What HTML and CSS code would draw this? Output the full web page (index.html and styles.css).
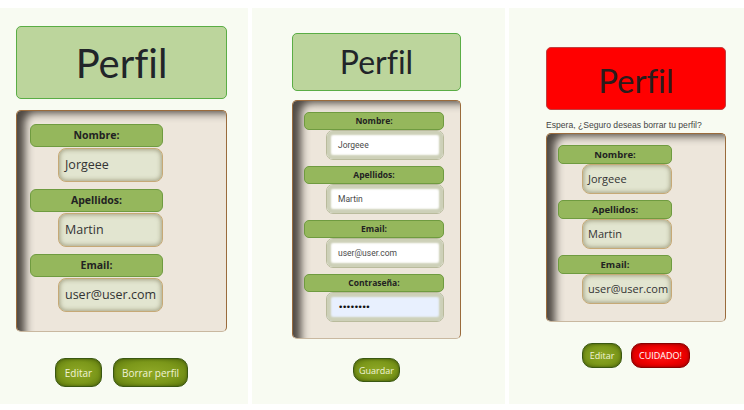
FILE: index.html
```html
<!DOCTYPE html>
<html lang="es">
<head>
<meta charset="utf-8">
<title>Perfil</title>
<link rel="stylesheet" href="styles.css">
</head>
<body>
<div class="screens">
  <section class="screen s1">
    <div class="title"><h1>Perfil</h1></div>
    <div class="card">
      <div class="field"><div class="label">Nombre:</div><div class="input">Jorgeee</div></div>
      <div class="field"><div class="label">Apellidos:</div><div class="input">Martin</div></div>
      <div class="field"><div class="label">Email:</div><div class="input">user@user.com</div></div>
    </div>
    <div class="actions">
      <button class="btn">Editar</button>
      <button class="btn">Borrar perfil</button>
    </div>
  </section>

  <section class="screen s2">
    <div class="title"><h1>Perfil</h1></div>
    <div class="card">
      <div class="field"><div class="label">Nombre:</div><div class="input">Jorgeee</div></div>
      <div class="field"><div class="label">Apellidos:</div><div class="input">Martin</div></div>
      <div class="field"><div class="label">Email:</div><div class="input">user@user.com</div></div>
      <div class="field"><div class="label">Contraseña:</div><div class="input pass">••••••••</div></div>
    </div>
    <div class="actions">
      <button class="btn">Guardar</button>
    </div>
  </section>

  <section class="screen s3">
    <div class="title danger"><h1>Perfil</h1></div>
    <p class="warn">Espera, ¿Seguro deseas borrar tu perfil?</p>
    <div class="card">
      <div class="field"><div class="label">Nombre:</div><div class="input">Jorgeee</div></div>
      <div class="field"><div class="label">Apellidos:</div><div class="input">Martin</div></div>
      <div class="field"><div class="label">Email:</div><div class="input">user@user.com</div></div>
    </div>
    <div class="actions">
      <button class="btn">Editar</button>
      <button class="btn btn-danger">CUIDADO!</button>
    </div>
  </section>
</div>
</body>
</html>
```
FILE: styles.css
```css
html, body {
  margin: 0;
  padding: 0;
  background: #ffffff;
  font-family: "Open Sans", "Noto Sans", sans-serif;
  color: #222;
}

.screens {
  display: flex;
  gap: 4px;
  padding-top: 8px;
}

.screen {
  box-sizing: border-box;
  height: 396px;
  background: #f8fbf2;
  display: flex;
  flex-direction: column;
}

.title {
  box-sizing: border-box;
  display: flex;
  align-items: center;
  justify-content: center;
  background: #bcd59c;
  border: 1px solid #5aad45;
  border-radius: 5px;
}

.title h1 {
  margin: 0;
  font-family: "Lato", "Open Sans", sans-serif;
  font-weight: 400;
  font-variant-ligatures: none;
  line-height: 1;
  color: #212529;
}

.title.danger {
  background: #ff0000;
  border-color: #c04040;
}

.title.danger h1 {
  color: #2a1c1c;
  padding-top: 4px;
}

.card {
  box-sizing: border-box;
  background: #ede6db;
  border: 1px solid #9a6b3c;
  border-bottom-color: #c9b8a0;
  border-radius: 5px;
  box-shadow: inset 14px 8px 9px -6px rgba(50, 45, 40, 0.85);
  display: flex;
  flex-direction: column;
}

.field {
  display: flex;
  flex-direction: column;
  align-items: flex-start;
}

.label {
  box-sizing: border-box;
  background: #95b75c;
  border: 1px solid #6f9b40;
  border-radius: 6px;
  text-align: center;
  font-weight: 700;
  color: #222;
}

.input {
  box-sizing: border-box;
  background: #e2e5d0;
  border: 1px solid #c6a976;
  border-radius: 8px;
  box-shadow: inset 0 0 4px 1px rgba(125, 120, 85, 0.6);
  color: #333;
  white-space: nowrap;
}

.actions {
  display: flex;
  justify-content: center;
}

.btn {
  box-sizing: border-box;
  font-family: "Open Sans", "Noto Sans", sans-serif;
  color: #f0f3d6;
  white-space: nowrap;
  border: 1px solid #3a5812;
  border-radius: 10px;
  background: radial-gradient(ellipse at center, #8ea826 0%, #7c981a 55%, #5b770d 100%);
  box-shadow: inset 0 0 3px rgba(0, 0, 0, 0.35);
  padding: 0;
  cursor: pointer;
}

.btn-danger {
  color: #ffffff;
  border-color: #8a0000;
  background: radial-gradient(ellipse at center, #ff1a1a 0%, #ee0000 55%, #c20000 100%);
}

/* Screen 1 */
.s1 { width: 248px; padding: 18px 21px 0 16px; }
.s1 .title { height: 73px; }
.s1 .title h1 { font-size: 40px; }
.s1 .card { margin-top: 11px; padding: 13px 0 19px 13px; gap: 7px; }
.s1 .label { width: 133px; height: 23px; line-height: 21px; font-size: 10.5px; }
.s1 .input { width: 105px; height: 34px; margin-left: 28px; margin-top: 1px; padding-left: 6px; line-height: 32px; font-size: 12.5px; }
.s1 .actions { margin-top: 26px; gap: 11px; }
.s1 .btn { height: 29px; font-size: 10px; }
.s1 .btn:first-child { width: 47px; }
.s1 .btn:last-child { width: 75px; }

/* Screen 2 */
.s2 { width: 253px; padding: 25px 44px 0 40px; }
.s2 .title { height: 58px; }
.s2 .title h1 { font-size: 32px; }
.s2 .card { margin-top: 9px; padding: 11px 0 16px 11px; gap: 6px; }
.s2 .label { width: 140px; height: 18px; line-height: 16px; font-size: 8.5px; border-radius: 5px; }
.s2 .input {
  width: 118px;
  height: 30px;
  margin-left: 22px;
  padding-left: 11px;
  line-height: 28px;
  font-family: "Roboto", sans-serif;
  font-size: 8.5px;
  color: #4a4a4a;
  background: #ffffff;
  border: 1px solid #b9bb9c;
  border-radius: 7px;
  box-shadow: inset 0 0 2px 4px #cdd0b8;
}
.s2 .input.pass {
  background: #e8f0fe;
  color: #111;
  font-family: "DejaVu Sans", sans-serif;
  font-size: 9px;
  letter-spacing: -1.4px;
}
.s2 .actions { margin-top: 19px; }
.s2 .btn { width: 47px; height: 24px; font-size: 9px; }

/* Screen 3 */
.s3 { width: 235px; padding: 39px 18px 0 37px; }
.s3 .title { height: 63px; }
.s3 .title h1 { font-size: 33px; }
.s3 .warn {
  margin: 9px 0 2px;
  font-family: "Liberation Sans", sans-serif;
  font-size: 8.6px;
  line-height: 12px;
  color: #444;
}
.s3 .card { padding: 11px 0 17px 11px; gap: 6px; }
.s3 .label { width: 114px; height: 19px; line-height: 17px; font-size: 9.5px; border-radius: 5px; }
.s3 .input { width: 90px; height: 30px; margin-left: 24px; padding-left: 5px; line-height: 28px; font-size: 11px; }
.s3 .actions { margin-top: 21px; gap: 9px; }
.s3 .btn { height: 25px; font-size: 9px; }
.s3 .btn:first-child { width: 40px; }
.s3 .btn:last-child { width: 59px; }
```
